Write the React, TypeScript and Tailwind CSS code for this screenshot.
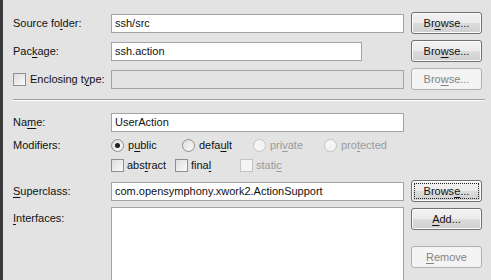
import React from 'react';

const font = "font-['Tahoma','Liberation_Sans',sans-serif] text-[11px]";

// label text with a single underlined mnemonic letter
const Mn: React.FC<{ text: string; at: number }> = ({ text, at }) => (
  <span className="whitespace-pre">
    {text.slice(0, at)}
    <span className="underline underline-offset-[2px]">{text[at]}</span>
    {text.slice(at + 1)}
  </span>
);

const Button: React.FC<{
  text: string;
  at: number;
  disabled?: boolean;
  focused?: boolean;
  className?: string;
}> = ({ text, at, disabled, focused, className = '' }) => {
  if (disabled) {
    return (
      <div
        className={`flex h-[22px] w-[71px] items-center justify-center rounded-[3px] border border-[#adb2b5] bg-[#f4f4f4] text-[#838383] ${className}`}
      >
        <Mn text={text} at={at} />
      </div>
    );
  }
  return (
    <div
      className={`relative flex h-[22px] w-[71px] items-center justify-center rounded-[3px] border border-[#707070] bg-[linear-gradient(to_bottom,#f2f2f2_0%,#ebebeb_50%,#dddddd_50%,#cfcfcf_100%)] text-[#111] shadow-[inset_0_0_0_1px_#fcfcfc] ${className}`}
    >
      {focused && (
        <div className="absolute inset-[2px] border border-dotted border-[#222]" />
      )}
      <Mn text={text} at={at} />
    </div>
  );
};

const TextBox: React.FC<{ value?: string; width?: string; disabled?: boolean }> = ({
  value = '',
  width = 'w-[293px]',
  disabled,
}) => (
  <div
    className={`flex h-[19px] ${width} items-center border border-[#a3a3a3] px-[3px] ${
      disabled ? 'bg-[#e3e3e3]' : 'bg-white'
    } text-[#111]`}
  >
    {value}
  </div>
);

const CheckBox: React.FC<{ disabled?: boolean }> = ({ disabled }) => (
  <div
    className={`h-[13px] w-[13px] border ${
      disabled
        ? 'border-[#c4c4c4] bg-[#f4f4f4]'
        : 'border-[#8e8f8f] bg-[linear-gradient(135deg,#dcdcdc,#fbfbfb)]'
    }`}
  />
);

const Radio: React.FC<{ checked?: boolean; disabled?: boolean }> = ({ checked, disabled }) => (
  <div
    className={`flex h-[13px] w-[13px] items-center justify-center rounded-full border ${
      disabled
        ? 'border-[#c4c4c4] bg-[#f4f4f4]'
        : 'border-[#8e8f8f] bg-[linear-gradient(135deg,#dcdcdc,#fbfbfb)]'
    }`}
  >
    {checked && <div className="h-[5px] w-[5px] rounded-full bg-[#222]" />}
  </div>
);

export default function App() {
  return (
    <div className={`flex h-[280px] w-[491px] overflow-hidden bg-[#e3e3e3] ${font} text-[#111]`}>
      <div className="w-[3px] shrink-0 bg-[#3a3a3a]" />
      <div className="flex flex-1 flex-col pl-[10px] pt-[12px]">
        <div className="flex h-[22px] items-center">
          <div className="w-[98px]">
            <Mn text="Source folder:" at={9} />
          </div>
          <TextBox value="ssh/src" />
          <Button text="Browse..." at={2} className="ml-[7px]" />
        </div>
        <div className="mt-[6px] flex h-[22px] items-center">
          <div className="w-[98px]">
            <Mn text="Package:" at={3} />
          </div>
          <TextBox value="ssh.action" width="w-[251px]" />
          <div className="w-[42px]" />
          <Button text="Browse..." at={3} className="ml-[7px]" />
        </div>
        <div className="mt-[6px] flex h-[22px] items-center">
          <div className="flex w-[98px] items-center gap-[4px]">
            <CheckBox />
            <Mn text="Enclosing type:" at={11} />
          </div>
          <TextBox disabled />
          <Button text="Browse..." at={3} disabled className="ml-[7px]" />
        </div>

        <div className="mt-[9px] mr-[6px] h-[2px] border-t border-[#a0a0a0] border-b border-b-white" />

        <div className="mt-[12px] flex h-[19px] items-center">
          <div className="w-[98px]">
            <Mn text="Name:" at={2} />
          </div>
          <TextBox value="UserAction" />
        </div>
        <div className="mt-[7px] flex h-[13px] items-center">
          <div className="w-[98px]">Modifiers:</div>
          <div className="flex w-[71px] items-center gap-[4px]">
            <Radio checked />
            <Mn text="public" at={1} />
          </div>
          <div className="flex w-[71px] items-center gap-[4px]">
            <Radio />
            <Mn text="default" at={4} />
          </div>
          <div className="flex w-[71px] items-center gap-[4px] text-[#9a9a9a]">
            <Radio disabled />
            <Mn text="private" at={3} />
          </div>
          <div className="flex items-center gap-[4px] text-[#9a9a9a]">
            <Radio disabled />
            <Mn text="protected" at={3} />
          </div>
        </div>
        <div className="mt-[7px] flex h-[13px] items-center">
          <div className="w-[98px]" />
          <div className="flex w-[64px] items-center gap-[3px]">
            <CheckBox />
            <Mn text="abstract" at={3} />
          </div>
          <div className="flex w-[65px] items-center gap-[3px]">
            <CheckBox />
            <Mn text="final" at={4} />
          </div>
          <div className="flex items-center gap-[3px] text-[#9a9a9a]">
            <CheckBox disabled />
            <Mn text="static" at={5} />
          </div>
        </div>
        <div className="mt-[8px] flex h-[22px] items-center">
          <div className="w-[98px]">
            <Mn text="Superclass:" at={0} />
          </div>
          <TextBox value="com.opensymphony.xwork2.ActionSupport" />
          <Button text="Browse..." at={5} focused className="ml-[7px]" />
        </div>
        <div className="mt-[5px] flex">
          <div className="w-[98px] pt-[3px]">
            <Mn text="Interfaces:" at={0} />
          </div>
          <div className="h-[80px] w-[293px] border border-[#a3a3a3] bg-white" />
          <div className="ml-[7px] flex flex-col pt-[1px]">
            <Button text="Add..." at={0} />
            <Button text="Remove" at={0} disabled className="mt-[16px]" />
          </div>
        </div>
      </div>
    </div>
  );
}
